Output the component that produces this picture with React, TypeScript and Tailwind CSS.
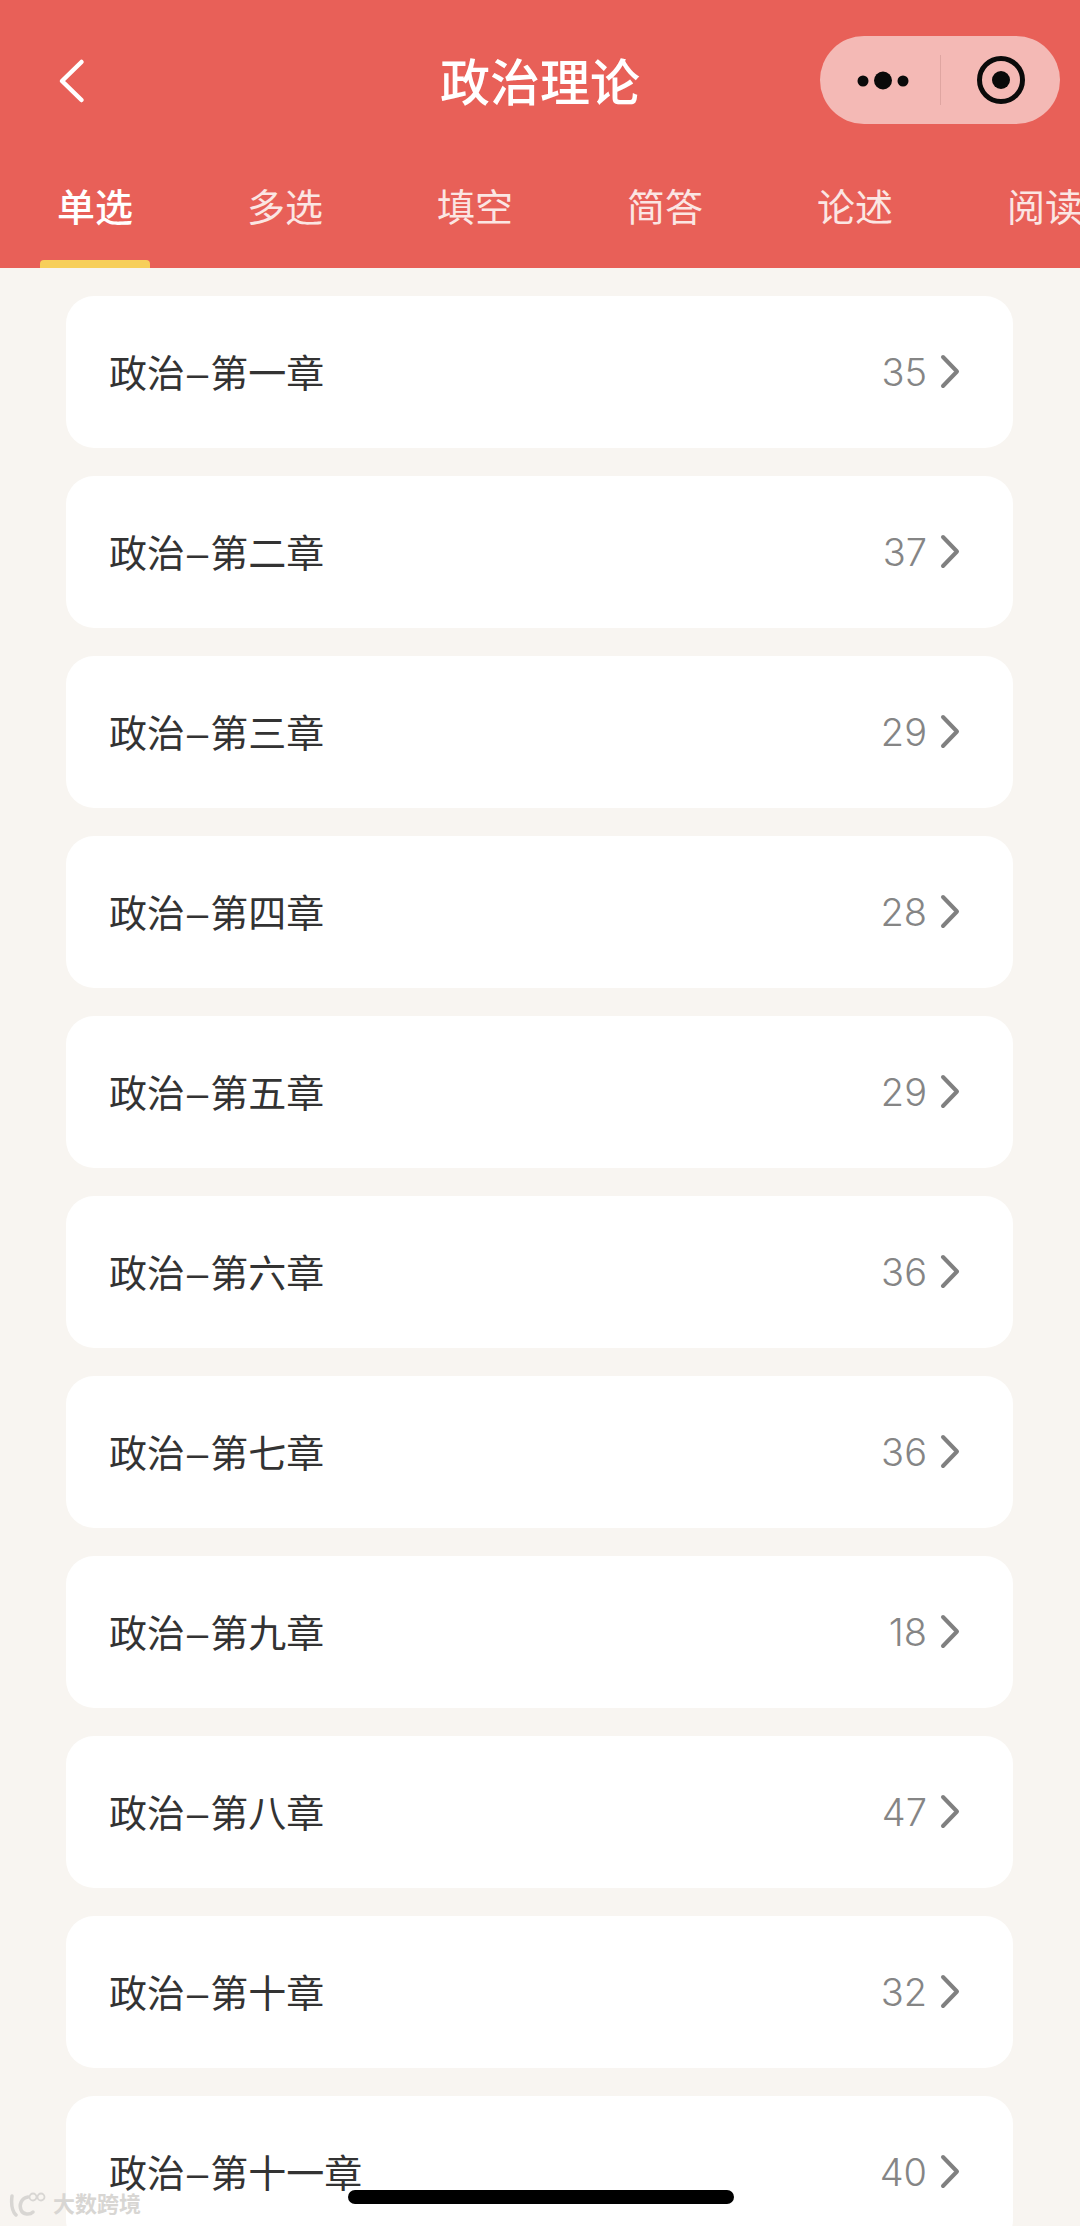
const tabs = ['单选', '多选', '填空', '简答', '论述', '阅读']

const chapters = [
  { name: '第一章', count: 35 },
  { name: '第二章', count: 37 },
  { name: '第三章', count: 29 },
  { name: '第四章', count: 28 },
  { name: '第五章', count: 29 },
  { name: '第六章', count: 36 },
  { name: '第七章', count: 36 },
  { name: '第九章', count: 18 },
  { name: '第八章', count: 47 },
  { name: '第十章', count: 32 },
  { name: '第十一章', count: 40 },
]

const Capsule = () => (
  <div className="flex h-[88px] w-[240px] items-center rounded-full bg-[#f4b9b5]">
    <svg width="120" height="88" viewBox="0 0 120 88" className="shrink-0">
      <circle cx="43" cy="45" r="5.5" fill="#0a0a0a" />
      <circle cx="63" cy="44.5" r="9" fill="#0a0a0a" />
      <circle cx="83" cy="45" r="5.5" fill="#0a0a0a" />
    </svg>
    <div className="h-[50px] w-px shrink-0 bg-[#dfa5a1]" />
    <svg width="119" height="88" viewBox="0 0 119 88" className="shrink-0">
      <circle cx="60" cy="44" r="21.5" fill="none" stroke="#0a0a0a" strokeWidth="5" />
      <circle cx="60" cy="44" r="9" fill="#0a0a0a" />
    </svg>
  </div>
)

const ChapterRow = ({ name, count }: { name: string; count: number }) => (
  <div className="flex h-[152px] shrink-0 items-center justify-between rounded-[28px] bg-white pl-[43px] pr-[53px]">
    <span className="mt-[4px] text-[38px] leading-none text-[#333333]">
      政治<span className="mx-[2px]">–</span>
      {name}
    </span>
    <div className="flex items-center gap-[13px]">
      <span className="font-['Inter'] text-[38px] leading-none font-light text-[#858585]">{count}</span>
      <svg width="20" height="36" viewBox="0 0 20 36" fill="none">
        <path d="M3 3 L17 17.5 L3 32" stroke="#808080" strokeWidth="4" strokeLinecap="round" strokeLinejoin="round" />
      </svg>
    </div>
  </div>
)

export default function App() {
  return (
    <div className="relative h-[2226px] w-[1080px] overflow-hidden bg-[#f8f5f1] font-['Liberation_Sans','Noto_Sans_CJK_SC',sans-serif]">
      <header className="h-[268px] bg-[#e86058] text-white">
        <div className="flex h-[160px] items-center justify-between pl-[57px] pr-[20px]">
          <svg width="30" height="48" viewBox="0 0 30 48" fill="none" className="mt-[2px]">
            <path d="M24.5 5 L5 24 L24.5 43" stroke="white" strokeWidth="4.5" strokeLinecap="round" strokeLinejoin="round" />
          </svg>
          <Capsule />
        </div>
        <div className="relative flex gap-[114px] overflow-hidden pl-[57px]">
          {tabs.map((tab, i) => (
            <span
              key={tab}
              className={`h-[108px] shrink-0 pt-[23px] text-[38px] leading-[50px] ${i === 0 ? 'font-medium' : 'text-[#fbe6e3]'}`}
            >
              {tab}
            </span>
          ))}
          <div className="absolute bottom-0 left-[40px] h-[8px] w-[110px] rounded-t-[4px] bg-[#f7cf5b]" />
        </div>
      </header>

      <h1 className="absolute left-0 top-[58px] w-full text-center text-[50px] leading-[52px] font-medium text-white">
        政治理论
      </h1>

      <main className="flex flex-col gap-[28px] pl-[66px] pr-[67px] pt-[28px]">
        {chapters.map((c) => (
          <ChapterRow key={c.name} name={c.name} count={c.count} />
        ))}
      </main>

      {/* home indicator */}
      <div className="absolute bottom-[22px] left-[348px] h-[14px] w-[386px] rounded-full bg-black" />

      {/* watermark */}
      <div className="absolute bottom-[8px] left-[9px] flex items-center gap-[6px]">
        <svg width="38" height="26" viewBox="0 0 38 26" fill="none" stroke="#d8d6d3" strokeLinecap="round">
          <path d="M3 4 C2 12 3 19 7 23" strokeWidth="3.5" />
          <path d="M19 5 C12 6 10 13 12 18 C14 23 21 23 24 20" strokeWidth="3.5" />
          <circle cx="24" cy="5" r="3.5" strokeWidth="1.8" />
          <circle cx="32" cy="5" r="3.5" strokeWidth="1.8" />
        </svg>
        <span className="text-[22px] leading-none font-bold text-[#d8d6d3]">大数跨境</span>
      </div>
    </div>
  )
}
